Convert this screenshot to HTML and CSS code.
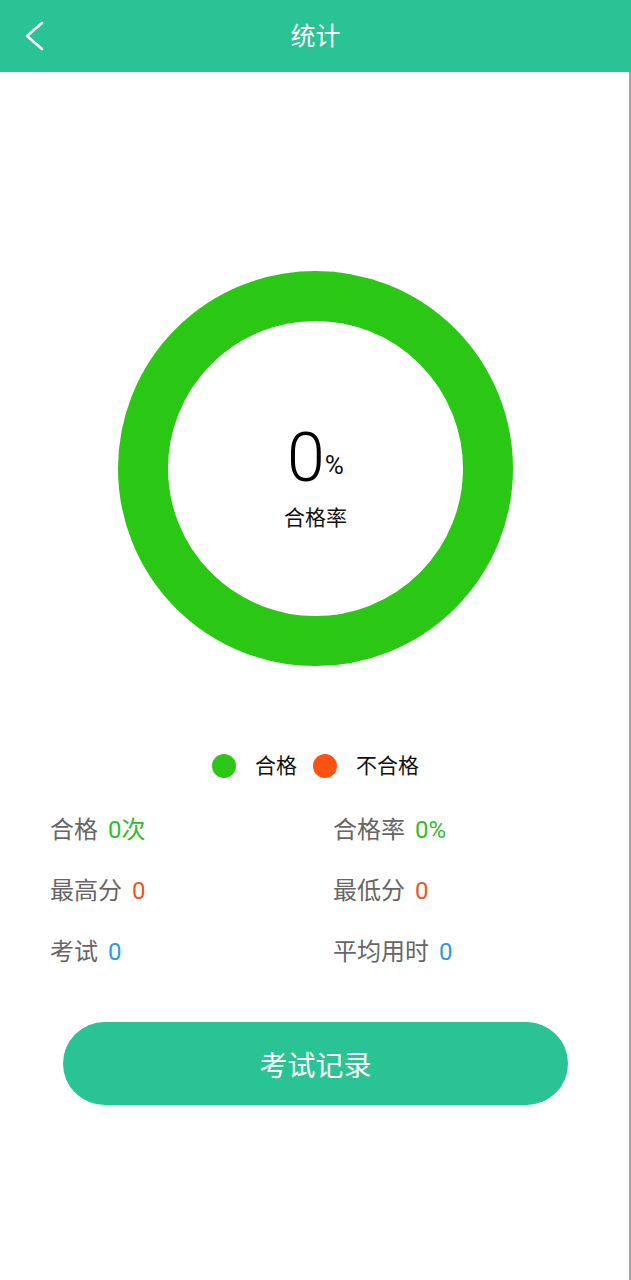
FILE: index.html
```html
<!DOCTYPE html>
<html lang="zh">
<head>
<meta charset="utf-8">
<title>统计</title>
<link rel="stylesheet" href="styles.css">
</head>
<body>
<header class="topbar">
  <span class="back">
    <svg width="24" height="34" viewBox="0 0 24 34"><path d="M19 4 L4 17 L19 30" fill="none" stroke="#fff" stroke-width="2.6" stroke-linecap="round" stroke-linejoin="round"/></svg>
  </span>
  <h1 class="title">统计</h1>
</header>
<main class="page">
  <div class="donut">
    <div class="rate"><span class="num">0</span><span class="pct">%</span></div>
    <div class="rate-label">合格率</div>
  </div>
  <div class="legend">
    <div class="legend-item"><span class="dot dot-pass"></span><span>合格</span></div>
    <div class="legend-item"><span class="dot dot-fail"></span><span>不合格</span></div>
  </div>
  <div class="stats">
    <div class="stat">合格<span class="val v-green">0次</span></div>
    <div class="stat">合格率<span class="val v-green">0%</span></div>
    <div class="stat">最高分<span class="val v-orange">0</span></div>
    <div class="stat">最低分<span class="val v-orange">0</span></div>
    <div class="stat">考试<span class="val v-blue">0</span></div>
    <div class="stat">平均用时<span class="val v-blue">0</span></div>
  </div>
  <button class="records">考试记录</button>
</main>
</body>
</html>
```
FILE: styles.css
```css
* { box-sizing: border-box; }
html, body { margin: 0; padding: 0; }
body {
  font-family: "Roboto", "Noto Sans CJK SC", sans-serif;
  background: #fff;
  color: #111;
}
.topbar {
  height: 72px;
  background: #2ac393;
  display: flex;
  align-items: center;
  justify-content: center;
  position: relative;
}
.back {
  position: absolute;
  left: 23px;
  top: 19px;
  width: 24px;
  height: 34px;
  display: block;
}
.back svg { display: block; }
.title {
  margin: 0;
  font-size: 25px;
  font-weight: 400;
  color: #fff;
  line-height: 1;
}
.page {
  min-height: calc(100vh - 72px);
  box-shadow: inset -2px 0 0 #a4a4a4;
  padding-top: 199px;
  display: flex;
  flex-direction: column;
  align-items: center;
}
.donut {
  width: 395px;
  height: 395px;
  border-radius: 50%;
  border: 50px solid #2bc715;
  display: flex;
  flex-direction: column;
  align-items: center;
  padding-top: 103px;
}
.rate {
  line-height: 68px;
  height: 68px;
  white-space: nowrap;
}
.num {
  font-size: 68px;
  font-weight: 300;
  line-height: 68px;
  color: #000;
}
.pct {
  font-size: 26px;
  font-weight: 400;
  color: #111;
  vertical-align: 7px;
}
.rate-label {
  margin-top: 14px;
  font-size: 21px;
  line-height: 24px;
  color: #111;
}
.legend {
  margin-top: 88px;
  display: flex;
  gap: 16px;
  height: 24px;
  align-items: center;
}
.legend-item {
  display: flex;
  align-items: center;
  gap: 19px;
  font-size: 21px;
  line-height: 24px;
  color: #111;
}
.dot {
  width: 24px;
  height: 24px;
  border-radius: 50%;
  display: block;
}
.dot-pass { background: #2bc715; }
.dot-fail { background: #fd5311; }
.stats {
  align-self: stretch;
  margin-top: 37px;
  padding-left: 50px;
  display: grid;
  grid-template-columns: 283px 1fr;
  row-gap: 31px;
}
.stat {
  font-size: 24px;
  line-height: 30px;
  color: #666;
  white-space: nowrap;
}
.val { margin-left: 10px; }
.v-green { color: #33bb2e; }
.v-orange { color: #e8581c; }
.v-blue { color: #2d9ae0; }
.records {
  margin-top: 55px;
  width: 505px;
  height: 83px;
  border: 0;
  border-radius: 42px;
  background: #2ac393;
  color: #fff;
  font-family: "Noto Sans CJK SC", sans-serif;
  font-size: 28px;
  cursor: pointer;
}
```
